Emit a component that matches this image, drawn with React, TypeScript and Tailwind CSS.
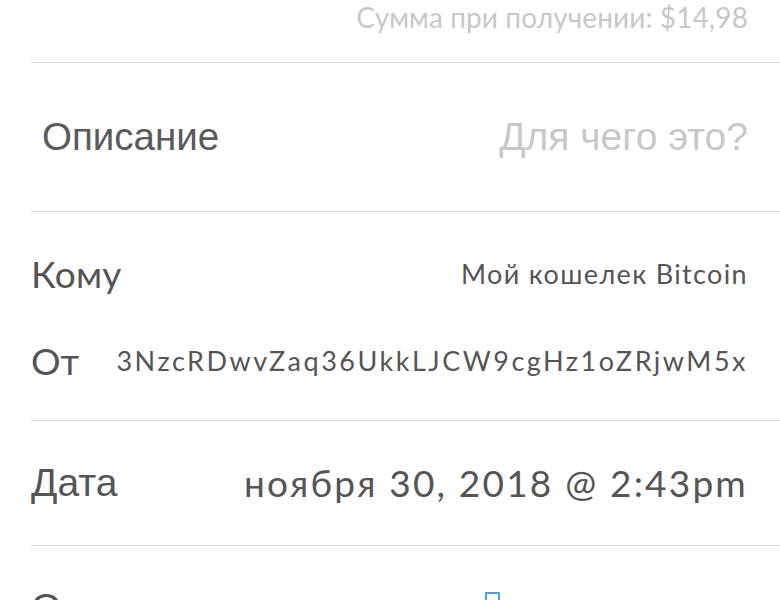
import React from 'react';

const geo = { fontFamily: 'Lato, "Noto Sans", sans-serif' };
const helv = { fontFamily: '"Liberation Sans", Arial, sans-serif' };

const App: React.FC = () => {
  return (
    <div className="w-[780px] h-[600px] overflow-hidden bg-white text-[#555555]">
      <div className="pl-[31px]">
        {/* Fee row */}
        <div className="h-[63px] border-b border-[#dedede] pr-[32px] flex justify-end">
          <span className="text-[28px] leading-none mt-[3px] tracking-[0.1px] text-[#c8c8c8]" style={geo}>
            Сумма при получении: $14,98
          </span>
        </div>

        {/* Description */}
        <div className="h-[149px] border-b border-[#dedede] pr-[32px] flex items-center justify-between">
          <span className="text-[38.5px] pl-[11px] text-[#5a5a5a]" style={helv}>Описание</span>
          <span className="text-[39px] text-[#c8c8c8]" style={helv}>Для чего это?</span>
        </div>

        {/* To / From */}
        <div className="h-[209px] border-b border-[#dedede] pr-[32px] flex flex-col">
          <div className="flex items-center justify-between mt-[31px] h-[62px]">
            <span className="text-[37px] tracking-[0.3px]" style={geo}>Кому</span>
            <span className="text-[27px] tracking-[1.35px]" style={geo}>Мой кошелек Bitcoin</span>
          </div>
          <div className="flex items-center justify-between mt-[25px] h-[62px]">
            <span className="text-[37px]" style={geo}>От</span>
            <span className="text-[27px] tracking-[2.5px]" style={geo}>3NzcRDwvZaq36UkkLJCW9cgHz1oZRjwM5x</span>
          </div>
        </div>

        {/* Date */}
        <div className="h-[125px] border-b border-[#dedede] pr-[32px] flex items-center justify-between">
          <span className="text-[39px]" style={helv}>Дата</span>
          <span className="text-[37px] tracking-[2.2px]" style={geo}>ноября 30, 2018 @ 2:43pm</span>
        </div>

        {/* Next row, cut off */}
        <div className="h-[120px] pr-[32px] flex items-start">
          <span className="text-[39px] leading-none mt-[42px]" style={helv}>О</span>
          <div className="ml-[424px] mt-[46px] w-[15px] h-[15px] border-2 border-[#4aa3dc]" />
        </div>
      </div>
    </div>
  );
};

export default App;
